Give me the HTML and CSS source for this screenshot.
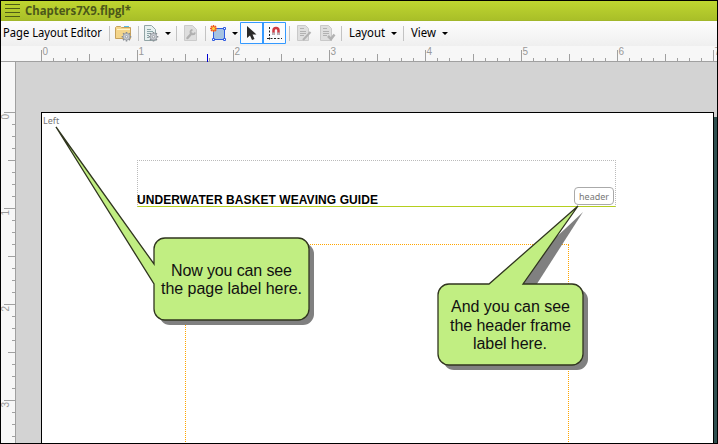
FILE: index.html
```html
<!DOCTYPE html>
<html lang="en">
<head>
<meta charset="utf-8">
<title>Page Layout Editor</title>
<link rel="stylesheet" href="styles.css">
</head>
<body>
<div class="window">
  <header class="titlebar">
    <span class="grip"><i></i><i></i><i></i><i></i></span>
    <svg class="title" width="120" height="20"><text x="0" y="13.500" textLength="106" lengthAdjust="spacingAndGlyphs">Chapters7X9.flpgl*</text></svg>
  </header>
  <nav class="toolbar">
    <svg width="715" height="25">
      <text class="ui" x="2" y="16" textLength="99" lengthAdjust="spacingAndGlyphs">Page Layout Editor</text>
      <g class="separators">
        <path d="M108.500 5v15M137.500 5v15M175.500 5v15M204.500 5v15M288.500 5v15M340.500 5v15M402.500 5v15"/>
      </g>
      <g class="arrows">
        <path d="M164 11h6l-3 3zM231 11h6l-3 3zM390 11h6l-3 3zM441 11h6l-3 3z"/>
      </g>
      <!-- open folder -->
      <g>
        <path d="M114.500 17.500v-11l1-1h4l1 1h9v11z" fill="#f4d58a" stroke="#c6a15c"/>
        <path d="M116 8.500h13" stroke="#fff3cb"/>
        <path d="M123 5.500h5" stroke="#54bde8"/>
      </g>
      <!-- page settings -->
      <g>
        <path d="M143.500 4.500h7l4 4v11h-11z" fill="#e7f0f0" stroke="#92a5a6"/>
        <path d="M146 8.500h4M146 10.500h6M146 12.500h4M146 14.500h2M146 16.500h2" stroke="#8ca5a8"/>
      </g>
      <g>
        <g stroke="#858a90" stroke-width="1.600">
          <path d="M125.500 11v9.500M120.700 15.700h9.600M122.100 12.300l6.800 6.800M128.900 12.300l-6.800 6.800"/>
          <path d="M152.500 11v9.500M147.700 15.700h9.600M149.100 12.300l6.800 6.800M155.900 12.300l-6.800 6.800"/>
        </g>
        <g fill="#c9ccd2" stroke="#9b9fa6" stroke-width=".8">
          <circle cx="125.500" cy="15.700" r="3.300"/>
          <circle cx="152.500" cy="15.700" r="3.300"/>
        </g>
        <g fill="#f5f5f5" stroke="#888d94" stroke-width=".7">
          <circle cx="125.500" cy="15.700" r="1.200"/>
          <circle cx="152.500" cy="15.700" r="1.200"/>
        </g>
      </g>
      <!-- disabled wrench -->
      <path d="M183.500 4.500h8l4 4v11h-12z" fill="#dedede" stroke="#cbcbcb"/>
      <path d="M186.500 17l4-4.500" stroke="#b0b0b0" stroke-width="2.500" stroke-linecap="round"/>
      <path d="M191.500 8.800a2.300 2.300 0 1 0 2.500 2.700" fill="none" stroke="#b0b0b0" stroke-width="1.800"/>
      <!-- frame tool -->
      <g>
        <path d="M212.500 7.500h11v11h-11z" fill="#a6c3e2" stroke="#2f5be0"/>
        <path d="M222.500 6.500h2v2h-2zM211.500 17.500h2v2h-2zM222.500 17.500h2v2h-2z" fill="#fff" stroke="#2f5be0"/>
        <path d="M212.500 4v7M209 7.500h7M210 5l5 5M215 5l-5 5" stroke="#f05a18" stroke-width="1.500"/>
        <circle cx="212.500" cy="7.500" r="1.500" fill="#ffd63b"/>
      </g>
      <!-- selected tools -->
      <path d="M239.500 1.500h45v21h-45z" fill="#f9fbfd" stroke="#3399ff"/>
      <path d="M262 1v22" stroke="#3399ff" stroke-width="2"/>
      <path d="M246 5v12l3-2.500 2 4.500 2.500-1-2-4.500h4z" fill="#292929"/>
      <path d="M268.500 6v14M266 17.500h15" stroke="#222" stroke-dasharray="2 1.500"/>
      <path d="M272.500 14v-4.500a2.500 2.500 0 0 1 5 0V14" fill="none" stroke="#cf3941" stroke-width="2.500"/>
      <path d="M272.500 11.500v2.500M277.500 11.500v2.500" stroke="#b6bbc1" stroke-width="2.500"/>
      <!-- disabled review tools -->
      <g fill="#dfdfdf" stroke="#c9c9c9">
        <path d="M296.500 4.500h8l3 3v12h-11zM319.500 4.500h8l3 3v12h-11z"/>
        <path d="M299 7.500h4M299 10.500h6M299 12.500h6M299 14.500h4M322 7.500h4M322 10.500h6M322 12.500h6M322 14.500h4" stroke="#b2b2b2"/>
        <path d="M302 19l7.500-8" stroke="#b2b2b2" stroke-width="2"/>
        <path d="M327 15l3 3 3.500-4.500" fill="none" stroke="#b2b2b2" stroke-width="2.500"/>
      </g>
      <text class="ui" x="348" y="16" textLength="36" lengthAdjust="spacingAndGlyphs">Layout</text>
      <text class="ui" x="410" y="16" textLength="25" lengthAdjust="spacingAndGlyphs">View</text>
    </svg>
  </nav>
  <div class="ruler-top">
    <svg width="716" height="16" shape-rendering="crispEdges" id="top"></svg>
  </div>
  <main class="work">
    <div class="ruler-left">
      <svg width="15" height="381" shape-rendering="crispEdges" id="left"></svg>
    </div>
    <div class="canvas">
      <section class="page">
        <span class="page-label">Left</span>
        <div class="header-frame">
          <svg class="heading-line" width="250" height="16"><text class="heading" x="0" y="12" textLength="241">UNDERWATER BASKET WEAVING GUIDE</text></svg>
          <span class="frame-label">header</span>
        </div>
        <div class="body-frame"></div>
      </section>
      <div class="page-shadow"></div>
    </div>
  </main>
</div>
<svg class="callouts" width="718" height="443">
  <g class="shadow">
    <rect x="159" y="243" width="155" height="82" rx="11"/>
    <path d="M583 212L533 290H500z"/>
    <rect x="443" y="289" width="145" height="81" rx="11"/>
  </g>
  <g class="bubble">
    <path d="M165 238H298a11 11 0 0 1 11 11V309a11 11 0 0 1-11 11H165a11 11 0 0 1-11-11V284L56 127L154 264V249a11 11 0 0 1 11-11z"/>
    <path d="M449 284H489L578 206L523 284H572a11 11 0 0 1 11 11V354a11 11 0 0 1-11 11H449a11 11 0 0 1-11-11V295a11 11 0 0 1 11-11z"/>
  </g>
  <g class="note">
    <text x="171" y="276" textLength="121">Now you can see</text>
    <text x="161" y="294" textLength="141">the page label here.</text>
    <text x="451" y="312" textLength="119">And you can see</text>
    <text x="450" y="331" textLength="121">the header frame</text>
    <text x="473" y="349" textLength="74">label here.</text>
  </g>
</svg>
<script src="rulers.js"></script>
</body>
</html>
```
FILE: styles.css
```css
* { box-sizing: border-box; }
body { margin: 0; overflow: hidden; font-family: "Open Sans", "Noto Sans", sans-serif; }
svg { display: block; }
.window { width: 718px; height: 444px; border: 1px solid #000; display: flex; flex-direction: column; background: #f7f7f7; }
.titlebar { height: 20px; flex: none; display: flex; gap: 5px; padding-left: 4px; background: linear-gradient(#bfd630, #a9bf28); border-bottom: 1px solid #a2b72b; }
.grip { width: 15px; padding-top: 3px; display: flex; flex-direction: column; gap: 3px; }
.grip i { height: 1px; background: #4e5c16; }
.title text { font: 700 12px "Open Sans", sans-serif; fill: #4b5719; }
.toolbar { height: 25px; flex: none; background: linear-gradient(#fdfdfd, #efefef); }
.ui { font: 12px "Noto Sans", sans-serif; fill: #000; }
.separators { stroke: #c3c3c3; }
.ruler-top { height: 16px; flex: none; background: #f7f7f7; border-bottom: 1px solid #a0a0a0; }
.work { display: flex; flex: 1; min-height: 0; }
.ruler-left { width: 15px; border-right: 1px solid #a0a0a0; background: #f7f7f7; }
.tick { stroke: #a0a0a0; }
.cursor { stroke: #0000d0; }
.number { font: 10px "Liberation Sans", sans-serif; fill: #999; }
.canvas { flex: 1; display: flex; padding: 50px 0 0 25px; background: #d3d3d3; }
.page { width: 673px; flex: none; border: 1px solid #000; border-bottom: 0; background: #fff; overflow: hidden; padding-left: 95px; position: relative; }
.page-label { position: absolute; left: 1px; top: 2px; font: 9px/12px "Noto Sans", sans-serif; color: #777; }
.header-frame { width: 479px; height: 47px; margin-top: 47px; border: 1px dotted #bbb; border-bottom: 1px solid #b5cf1e; padding-top: 31px; position: relative; }
.heading-line { margin-left: -1px; }
.heading { font: 700 12px "Liberation Sans", sans-serif; fill: #000; }
.frame-label { position: absolute; right: 1px; bottom: 1px; width: 40px; height: 18px; border: 1px solid #aaa; border-radius: 4px; background: #fff; padding-left: 4px; font: 9px/17px "Noto Sans", sans-serif; color: #777; }
.body-frame { width: 384px; height: 250px; margin: 37px 0 0 48px; border: 1px dotted #ffa500; }
.page-shadow { width: 3px; margin-top: 5px; background: #2f4f4f; }
.callouts { position: absolute; left: 0; top: 0; }
.shadow { fill: #808080; }
.bubble { fill: #c1ee82; stroke: #30351f; stroke-width: 1.3; }
.note { font: 16px "Liberation Sans", sans-serif; fill: #111; }
```
FILE: rulers.js
```js
function add(parent, name, attributes, text) {
  const node = document.createElementNS('http://www.w3.org/2000/svg', name);
  for (const key in attributes) node.setAttribute(key, attributes[key]);
  if (text !== undefined) node.textContent = text;
  parent.appendChild(node);
}

const topRuler = document.getElementById('top');
for (let i = 0; i <= 56; i++) {
  const x = 40.5 + i * 12;
  const y = i % 8 === 0 ? 4 : i % 4 === 0 ? 8 : 12;
  add(topRuler, 'path', { class: 'tick', d: `M${x} ${y}V16` });
  if (i % 8 === 0) add(topRuler, 'text', { class: 'number', x: x + 1, y: 9 }, i / 8);
}
add(topRuler, 'path', { class: 'cursor', d: 'M206.5 8V16' });

const leftRuler = document.getElementById('left');
for (let i = 0; i < 28; i++) {
  const y = 50.5 + i * 12;
  const x = i % 8 === 0 ? 3 : i % 4 === 0 ? 7 : 11;
  add(leftRuler, 'path', { class: 'tick', d: `M${x} ${y}H15` });
  if (i % 8 === 0) add(leftRuler, 'text', { class: 'number', transform: `translate(8 ${y + 7}) rotate(-90)` }, i / 8);
}
```
